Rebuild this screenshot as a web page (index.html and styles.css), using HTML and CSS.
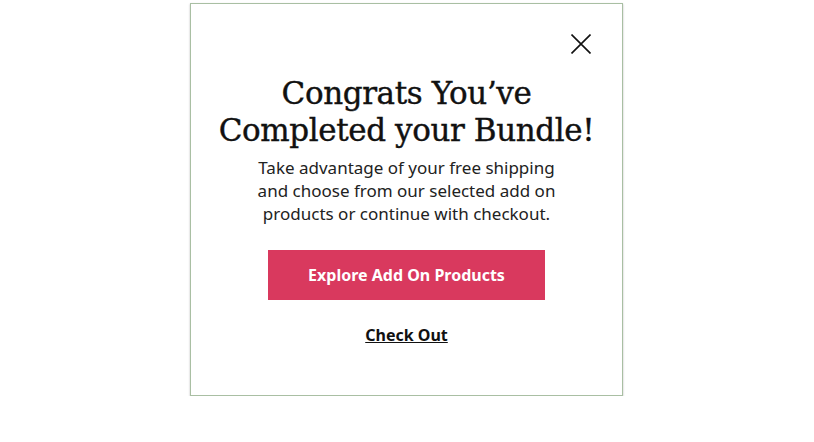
FILE: index.html
```html
<!DOCTYPE html>
<html>
<head>
<meta charset="utf-8">
<link rel="stylesheet" href="styles.css">
</head>
<body>
<div class="modal">
  <button class="close" aria-label="Close">
    <svg width="20" height="20" viewBox="0 0 20 20"><path d="M0.5 0.5 L19.5 19.5 M19.5 0.5 L0.5 19.5" stroke="#111" stroke-width="1.6" fill="none"/></svg>
  </button>
  <h1 class="title">Congrats You’ve<br>Completed your Bundle!</h1>
  <p class="text">Take advantage of your free shipping<br>and choose from our selected add on<br>products or continue with checkout.</p>
  <a class="cta" href="#">Explore Add On Products</a>
  <a class="checkout" href="#">Check Out</a>
</div>
</body>
</html>
```
FILE: styles.css
```css
html, body { margin: 0; padding: 0; background: #fff; }
body { font-family: "Noto Sans", sans-serif; }
.modal {
  position: relative;
  box-sizing: border-box;
  width: 433px;
  height: 393px;
  margin: 3px 0 0 190px;
  border: 1px solid #a9bfa3;
  box-shadow: 0 1px 2px rgba(0,0,0,0.25);
  display: flex;
  flex-direction: column;
  align-items: center;
  padding-top: 71px;
  color: #111;
}
.close {
  position: absolute;
  top: 30px;
  right: 31px;
  background: none;
  border: 0;
  padding: 0;
  line-height: 0;
}
.title {
  margin: 0;
  font-family: "DejaVu Serif", serif;
  font-weight: normal;
  font-size: 31px;
  line-height: 37px;
  text-align: center;
  letter-spacing: -0.4px;
  -webkit-text-stroke: 0.4px #111;
}
.text {
  margin: 7px 0 0;
  font-size: 17px;
  line-height: 23px;
  text-align: center;
  color: #222;
  font-weight: 400;
}
.cta {
  margin-top: 25px;
  width: 277px;
  height: 50px;
  background: #d9395e;
  color: #fff;
  font-weight: bold;
  font-size: 16px;
  display: flex;
  align-items: center;
  justify-content: center;
  text-decoration: none;
}
.checkout {
  margin-top: 24px;
  color: #111;
  font-weight: bold;
  font-size: 16px;
  text-decoration: underline;
}
```
